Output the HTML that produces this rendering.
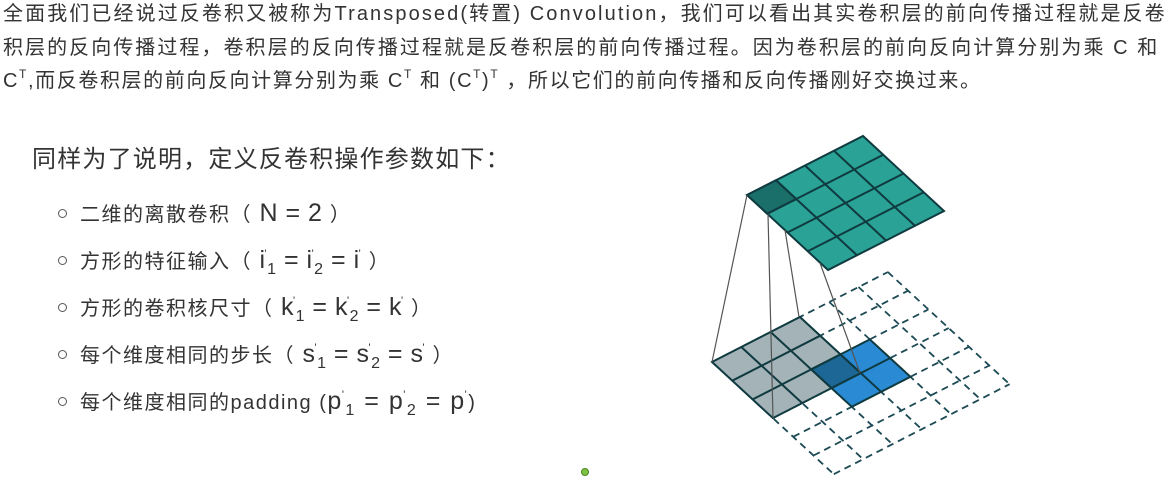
<!DOCTYPE html>
<html><head><meta charset="utf-8"><style>
html,body{margin:0;padding:0;background:#fff;width:1173px;height:485px;overflow:hidden}
body{font-family:"Liberation Sans","Noto Sans CJK SC",sans-serif;color:#333}
.p{position:absolute;left:3px;font-size:20px;white-space:nowrap;line-height:24px;letter-spacing:1.9px}
sup{font-size:12px;vertical-align:9px;line-height:0}
.h{position:absolute;left:32px;top:139px;font-size:24px;white-space:nowrap;letter-spacing:1.2px}
.li{position:absolute;left:80px;font-size:20px;white-space:nowrap;line-height:26px;letter-spacing:1.5px}
.li:before{content:"";position:absolute;left:-22px;top:9px;width:7px;height:7px;border:1.5px solid #555;border-radius:50%}
.m{font-size:25px;letter-spacing:0.5px}
.s{font-size:16px;position:relative;top:6px}
.pr{font-size:11px;position:relative;top:-11px;margin-left:-1px}
</style></head><body>
<div class="p" style="top:2px;letter-spacing:2.1px">全面我们已经说过反卷积又被称为Transposed(转置) Convolution，我们可以看出其实卷积层的前向传播过程就是反卷</div>
<div class="p" style="top:36px;letter-spacing:2.05px">积层的反向传播过程，卷积层的反向传播过程就是反卷积层的前向传播过程。因为卷积层的前向反向计算分别为乘 C 和</div>
<div class="p" style="top:69px;letter-spacing:1.6px">C<sup>T</sup>,而反卷积层的前向反向计算分别为乘 C<sup>T</sup> 和 (C<sup>T</sup>)<sup>T</sup> ，所以它们的前向传播和反向传播刚好交换过来。</div>
<div class="h">同样为了说明，定义反卷积操作参数如下：</div>
<div class="li" style="top:200px">二维的离散卷积（<span class="m"> N = 2 </span>）</div>
<div class="li" style="top:247px">方形的特征输入（<span class="m"> i<span class="pr">'</span><span class="s">1</span> = i<span class="pr">'</span><span class="s">2</span> = i<span class="pr">'</span> </span>）</div>
<div class="li" style="top:294px">方形的卷积核尺寸（<span class="m"> k<span class="pr">'</span><span class="s">1</span> = k<span class="pr">'</span><span class="s">2</span> = k<span class="pr">'</span> </span>）</div>
<div class="li" style="top:341px">每个维度相同的步长（<span class="m"> s<span class="pr">'</span><span class="s">1</span> = s<span class="pr">'</span><span class="s">2</span> = s<span class="pr">'</span> </span>）</div>
<div class="li" style="top:388px">每个维度相同的padding (<span class="m" style="letter-spacing:1.5px">p<span class="pr">'</span><span class="s">1</span> = p<span class="pr">'</span><span class="s">2</span> = p<span class="pr">'</span></span>)</div>
<svg width="1173" height="485" style="position:absolute;left:0;top:0">
<g stroke="#1c4a55" stroke-width="1.8" stroke-dasharray="7,5" fill="none">
<line x1="712" y1="362" x2="888" y2="272"/><line x1="732.3" y1="380.7" x2="908.1" y2="290.7"/><line x1="752.6" y1="399.4" x2="928.4" y2="309.4"/><line x1="772.9" y1="418.1" x2="948.7" y2="328.1"/><line x1="793.2" y1="436.8" x2="969" y2="346.8"/><line x1="813.5" y1="455.5" x2="989.3" y2="365.5"/><line x1="833.8" y1="474.2" x2="1009.6" y2="384.2"/>
<line x1="712" y1="362" x2="833.8" y2="474.2"/><line x1="741.3" y1="347" x2="863.1" y2="459.2"/><line x1="770.6" y1="332" x2="892.4" y2="444.2"/><line x1="799.9" y1="317" x2="921.7" y2="429.2"/><line x1="829.2" y1="302" x2="951" y2="414.2"/><line x1="858.5" y1="287" x2="980.3" y2="399.2"/><line x1="887.8" y1="272" x2="1009.6" y2="384.2"/>
</g>
<g transform="matrix(29.3,-15,20.3,18.7,712,362)" stroke="#0f3a40" stroke-width="2" fill="none">
<rect x="0" y="0" width="3" height="3" fill="#a3b3b7" vector-effect="non-scaling-stroke"/>
<rect x="2" y="2" width="2" height="2" fill="#2a8bd4" vector-effect="non-scaling-stroke"/>
<rect x="2" y="2" width="1" height="1" fill="#1d6797" vector-effect="non-scaling-stroke"/>
<path d="M1 0V3M2 0V3M0 1H3M0 2H3M3 2V4M2 3H4" vector-effect="non-scaling-stroke"/>
</g>
<g transform="matrix(29,-14.75,20.25,18.75,747,195)" stroke="#0f3a40" stroke-width="2" fill="none">
<rect x="0" y="0" width="4" height="4" fill="#2aa396" vector-effect="non-scaling-stroke"/>
<rect x="0" y="0" width="1" height="1" fill="#1b6f6a" vector-effect="non-scaling-stroke"/>
<path d="M1 0V4M2 0V4M3 0V4M0 1H4M0 2H4M0 3H4" vector-effect="non-scaling-stroke"/>
</g>
<g stroke="#555" stroke-width="1.2">
<line x1="747" y1="195" x2="712" y2="362"/><line x1="768" y1="214" x2="773" y2="418"/><line x1="785" y1="230" x2="799" y2="317"/><line x1="820" y1="263" x2="860" y2="373"/>
</g>
<circle cx="585" cy="472" r="3.5" fill="#7dc242" stroke="#4a8a20" stroke-width="1"/>
</svg>
</body></html>
